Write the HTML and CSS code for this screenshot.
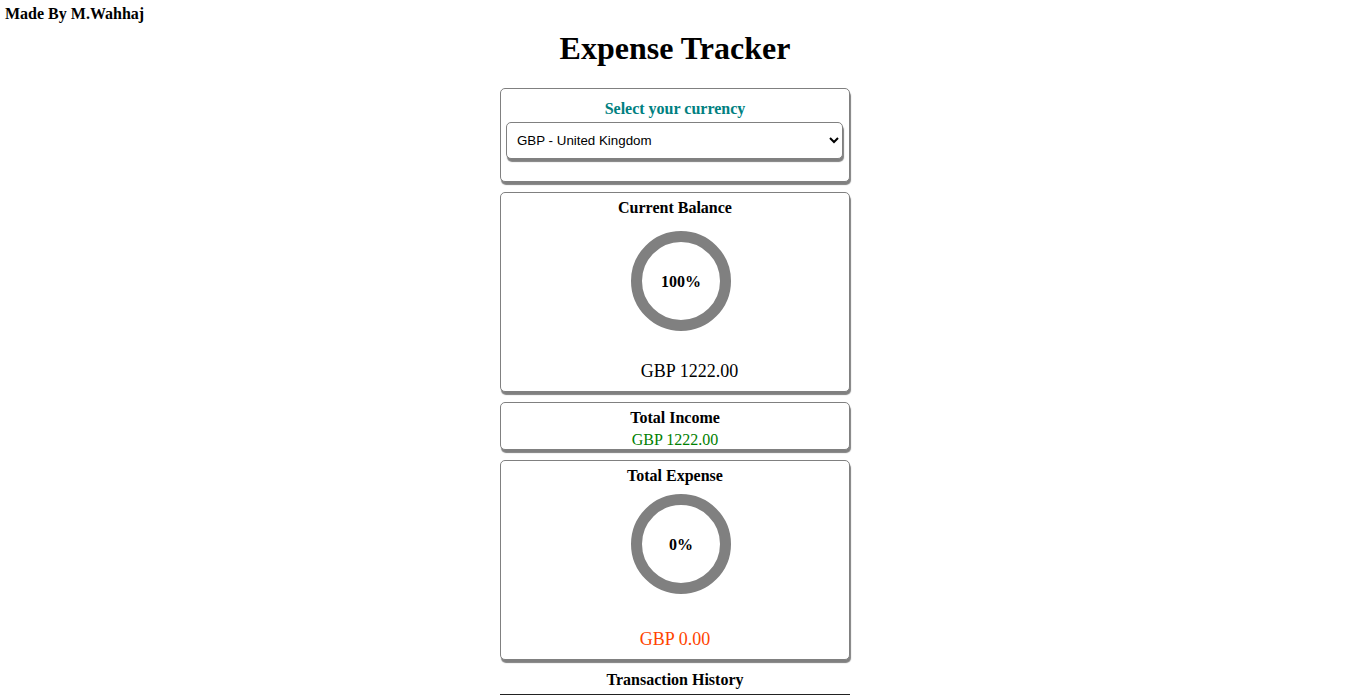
FILE: index.html
```html
<!DOCTYPE html>
<html>
<head>
<meta charset="utf-8">
<title>Expense Tracker</title>
<link rel="stylesheet" href="styles.css">
</head>
<body>
<div class="credit">Made By M.Wahhaj</div>
<h1 class="title">Expense Tracker</h1>
<main class="tracker">
  <section class="card currency-card">
    <div class="currency-label">Select your currency</div>
    <select class="currency-select">
      <option>GBP - United Kingdom</option>
    </select>
  </section>
  <section class="card balance-card">
    <div class="card-title">Current Balance</div>
    <div class="ring ring-balance">100%</div>
    <div class="amount balance-amount">GBP 1222.00</div>
  </section>
  <section class="card income-card">
    <div class="card-title">Total Income</div>
    <div class="income-amount">GBP 1222.00</div>
  </section>
  <section class="card expense-card">
    <div class="card-title">Total Expense</div>
    <div class="ring ring-expense">0%</div>
    <div class="amount expense-amount">GBP 0.00</div>
  </section>
  <div class="history-title">Transaction History</div>
  <div class="history-rule"></div>
</main>
</body>
</html>
```
FILE: styles.css
```css
html, body {
  margin: 0;
  padding: 0;
  background: #fff;
  color: #000;
  font-family: "Liberation Serif", "Times New Roman", serif;
}

body {
  padding-left: 5px;
}

.credit {
  padding: 5px 0 0 0;
  font-size: 16px;
  line-height: 18px;
  font-weight: bold;
}

.title {
  margin: 7px 0 0;
  text-align: center;
  font-size: 32px;
  line-height: 37px;
  font-weight: bold;
}

.tracker {
  width: 350px;
  margin: 21px auto 0;
  display: flex;
  flex-direction: column;
}

.card {
  box-sizing: border-box;
  border: 1px solid #808080;
  border-radius: 5px;
  box-shadow: 1px 3px 1px #808080;
  background: #fff;
  display: flex;
  flex-direction: column;
  align-items: center;
  text-align: center;
}

.card + .card {
  margin-top: 10px;
}

.currency-card {
  height: 94px;
  padding: 10.5px 5px 0;
  align-items: stretch;
}

.currency-label {
  color: #008080;
  font-weight: bold;
  font-size: 16px;
  line-height: 18px;
}

.currency-select {
  margin-top: 4.5px;
  width: calc(100% - 1px);
  height: 37px;
  padding: 0 6px;
  border: 1px solid #808080;
  border-radius: 5px;
  box-shadow: 1px 3px 1px #808080;
  background: #fff;
  color: #000;
  font-family: "Liberation Sans", Arial, sans-serif;
  font-size: 13.33px;
}

.card-title {
  font-weight: bold;
  font-size: 16px;
  line-height: 18px;
}

.balance-card {
  height: 200px;
  padding-top: 5.5px;
  margin-top: 10px;
}

.ring {
  box-sizing: border-box;
  width: 100px;
  height: 100px;
  margin-left: 12px;
  border: 11px solid #808080;
  border-radius: 50%;
  display: flex;
  align-items: center;
  justify-content: center;
  font-weight: bold;
  font-size: 16px;
  padding-top: 1px;
}

.ring-balance {
  margin-top: 14.5px;
}

.amount {
  font-size: 18px;
  line-height: 21px;
}

.balance-amount {
  margin-top: 29.5px;
  padding-left: 29px;
}

.card.income-card {
  height: 48px;
  padding-top: 5.5px;
  margin-top: 10px;
}

.income-amount {
  margin-top: 4.5px;
  color: #008000;
  font-size: 16px;
  line-height: 18px;
}

.expense-card {
  height: 200px;
  padding-top: 5.5px;
}

.ring-expense {
  margin-top: 9.5px;
}

.expense-amount {
  margin-top: 34.5px;
  color: #ff4500;
}

.history-title {
  margin-top: 11px;
  text-align: center;
  font-weight: bold;
  font-size: 16px;
  line-height: 18px;
}

.history-rule {
  margin-top: 5px;
  border-top: 2px solid #222;
}
```
